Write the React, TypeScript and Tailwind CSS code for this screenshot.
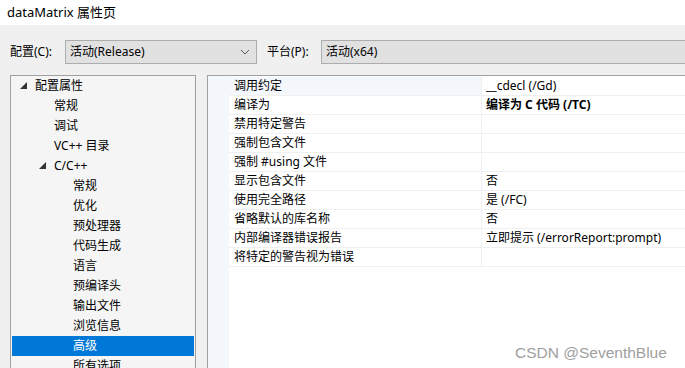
const font = { fontFamily: '"Segoe UI", "Noto Sans", "Noto Sans CJK SC", sans-serif' }

type TreeItem = { label: string; level: number; expanded?: boolean; selected?: boolean }

const tree: TreeItem[] = [
    { label: '配置属性', level: 0, expanded: true },
    { label: '常规', level: 1 },
    { label: '调试', level: 1 },
    { label: 'VC++ 目录', level: 1 },
    { label: 'C/C++', level: 1, expanded: true },
    { label: '常规', level: 2 },
    { label: '优化', level: 2 },
    { label: '预处理器', level: 2 },
    { label: '代码生成', level: 2 },
    { label: '语言', level: 2 },
    { label: '预编译头', level: 2 },
    { label: '输出文件', level: 2 },
    { label: '浏览信息', level: 2 },
    { label: '高级', level: 2, selected: true },
    { label: '所有选项', level: 2 },
]

const props: { name: string; value: string; bold?: boolean }[] = [
    { name: '调用约定', value: '__cdecl (/Gd)' },
    { name: '编译为', value: '编译为 C 代码 (/TC)', bold: true },
    { name: '禁用特定警告', value: '' },
    { name: '强制包含文件', value: '' },
    { name: '强制 #using 文件', value: '' },
    { name: '显示包含文件', value: '否' },
    { name: '使用完全路径', value: '是 (/FC)' },
    { name: '省略默认的库名称', value: '否' },
    { name: '内部编译器错误报告', value: '立即提示 (/errorReport:prompt)' },
    { name: '将特定的警告视为错误', value: '' },
]

function Triangle() {
    return (
        <svg width="7" height="7" viewBox="0 0 7 7" className="shrink-0">
            <polygon points="7,0 7,7 0,7" fill="#333" />
        </svg>
    )
}

export default function App() {
    // 트리 들여쓰기 (패널 안쪽 기준)
    const indent = ['left-[8px]', 'left-[27px]', 'left-[46px]']
    const textPad = ['pl-[23px]', 'pl-[42px]', 'pl-[61px]']

    return (
        <div className="w-[685px] h-[368px] overflow-hidden bg-[#f0f0f0] text-[12px] text-black relative" style={font}>
            {/* 标题栏 */}
            <div className="h-[25px] bg-white flex items-center pl-[7px] text-[13px]">dataMatrix 属性页</div>

            {/* 配置 / 平台 */}
            <div className="flex items-center h-[24px] mt-[15px]">
                <span className="w-[65px] pl-[10px]">配置(C):</span>
                <div className="w-[192px] h-[24px] border border-[#adadad] bg-[#e1e1e1] flex items-center justify-between pl-[4px] pr-[6px]">
                    <span>活动(Release)</span>
                    <svg width="10" height="6" viewBox="0 0 10 6">
                        <polyline points="1,1 5,5 9,1" fill="none" stroke="#555" strokeWidth="1" />
                    </svg>
                </div>
                <span className="w-[64px] pl-[10px]">平台(P):</span>
                <div className="flex-1 h-[24px] border border-[#adadad] border-r-0 bg-[#e1e1e1] flex items-center pl-[4px]">
                    活动(x64)
                </div>
            </div>

            {/* 主体 */}
            <div className="flex mt-[11px] h-[300px]">
                <div className="ml-[10px] w-[186px] border border-[#a0a0a0] border-b-0 bg-[#f5f5f5]">
                    {tree.map((item, i) => (
                        <div
                            key={i}
                            className={`relative h-[20px] flex items-center mx-[1px] ${item.selected ? 'bg-[#0078d7] text-white' : ''}`}
                        >
                            {item.expanded && (
                                <div className={`absolute top-[6px] ${indent[item.level]}`}>
                                    <Triangle />
                                </div>
                            )}
                            <span className={textPad[item.level]}>{item.label}</span>
                        </div>
                    ))}
                </div>

                <div className="ml-[11px] flex-1 border-t border-l border-[#a0a0a0] bg-white flex">
                    <div className="w-[21px] bg-[#f4f7fc]" />
                    <div className="flex-1 pt-[1px]">
                        {props.map((p, i) => (
                            <div key={i} className="flex h-[19px] border-b border-[#f0f0f0]">
                                <div className={`w-[253px] flex items-center pl-[5px] border-r border-[#f0f0f0] ${i === 0 ? 'bg-[#f4f7fc]' : ''}`}>
                                    {p.name}
                                </div>
                                <div className={`flex-1 flex items-center pl-[4px] whitespace-nowrap ${p.bold ? 'font-bold' : ''}`}>
                                    {p.value}
                                </div>
                            </div>
                        ))}
                    </div>
                </div>
            </div>

            {/* 水印 */}
            <div
                className="absolute left-[515px] top-[345px] text-[15.5px] leading-none text-[#a0a0a0]"
                style={{ fontFamily: '"Liberation Sans", Arial, sans-serif' }}
            >
                CSDN @SeventhBlue
            </div>
        </div>
    )
}
